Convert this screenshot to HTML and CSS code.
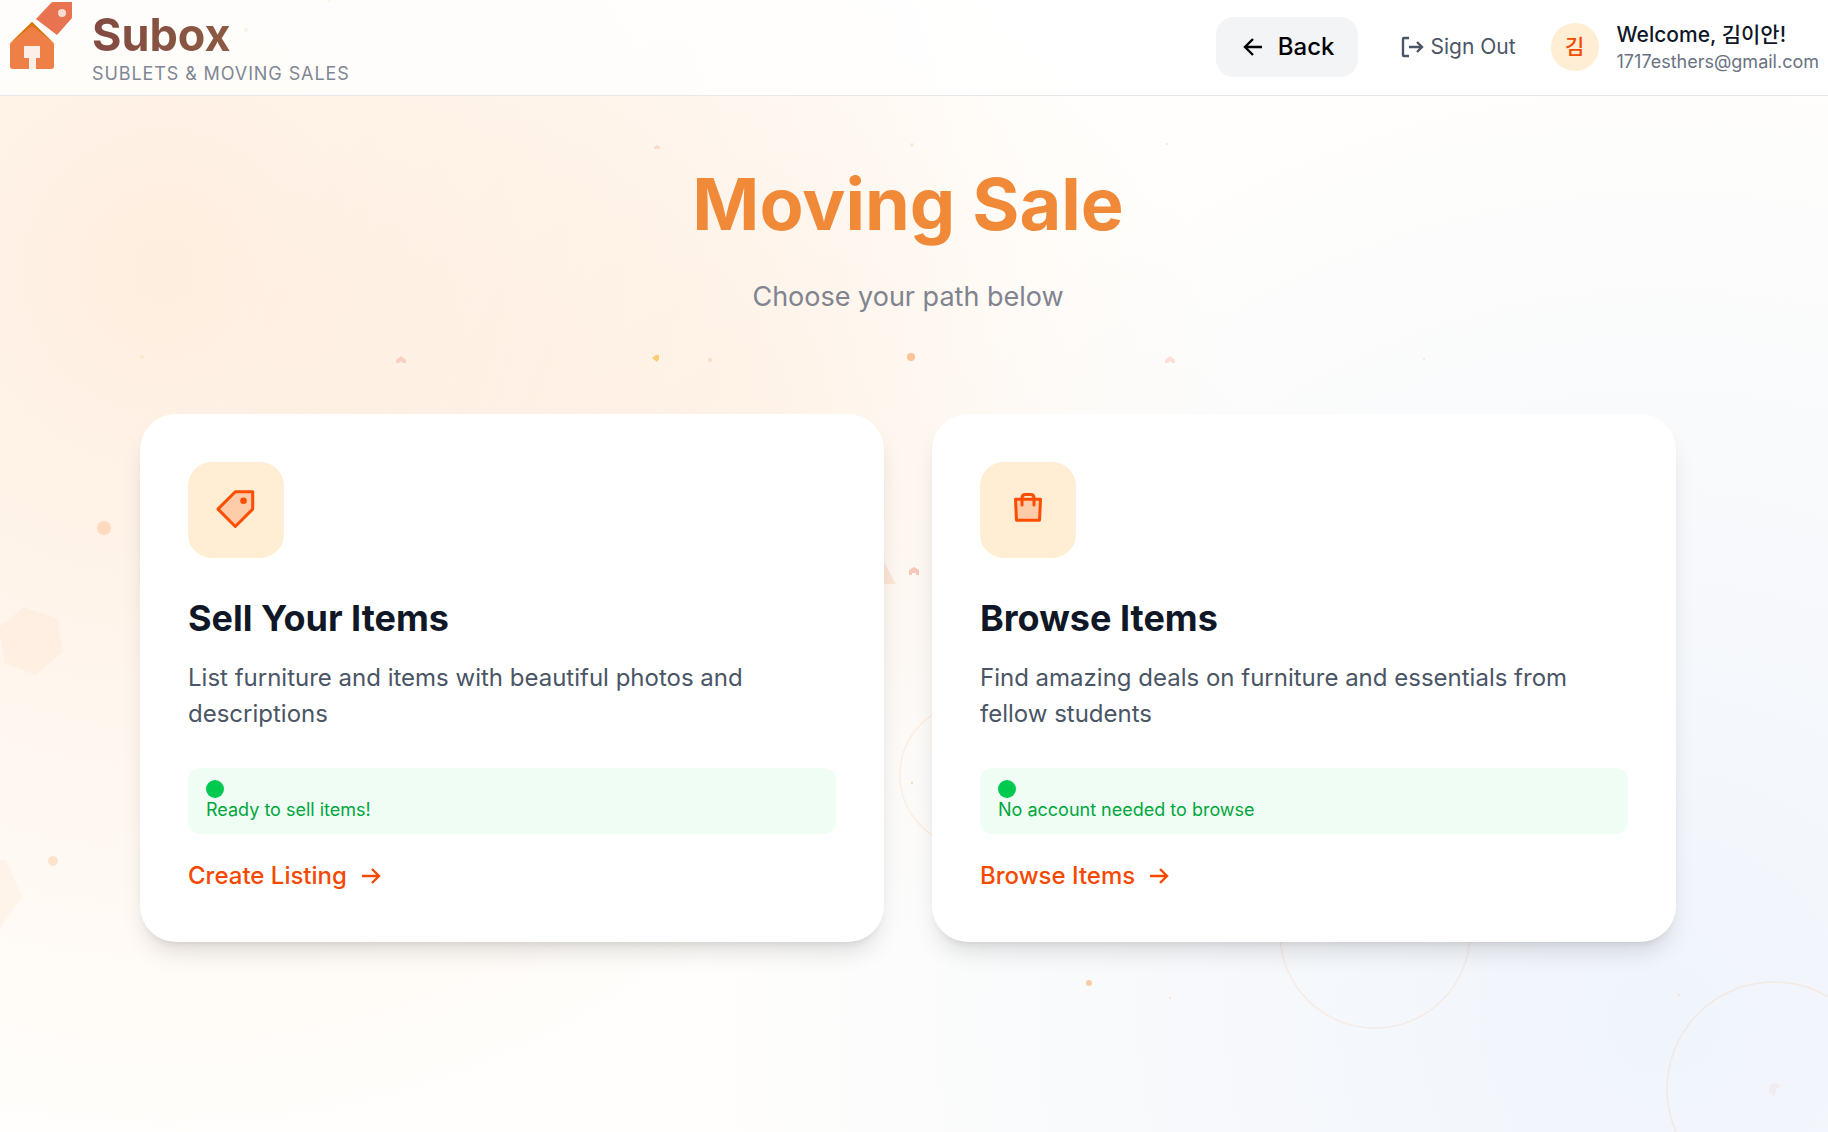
FILE: index.html
```html
<!DOCTYPE html>
<html lang="en">
<head>
<meta charset="utf-8">
<meta name="viewport" content="width=device-width, initial-scale=1">
<title>Subox – Moving Sale</title>
<link rel="stylesheet" href="styles.css">
</head>
<body>
<svg class="decor" aria-hidden="true">
  <g fill="#fb923c">
    <circle cx="104" cy="528" r="7" opacity=".25"/>
    <circle cx="53" cy="861" r="5" opacity=".22"/>
    <circle cx="911" cy="357" r="4" opacity=".5"/>
    <circle cx="710" cy="360" r="2" opacity=".25"/>
    <circle cx="1089" cy="983" r="3" opacity=".45"/>
    <circle cx="246" cy="30" r="2" opacity=".6"/>
    <circle cx="329" cy="0" r="2" opacity=".6"/>
    <circle cx="912" cy="145" r="2" opacity=".15"/>
    <circle cx="1167" cy="144" r="1" opacity=".25"/>
    <circle cx="142" cy="357" r="2" opacity=".12"/>
    <circle cx="1424" cy="359" r="1" opacity=".2"/>
    <circle cx="912" cy="783" r="1" opacity=".4"/>
    <circle cx="1170" cy="998" r="1" opacity=".2"/>
    <circle cx="1679" cy="995" r="1" opacity=".2"/>
    <path d="M24 607l34 12 5 33-27 23-32-12-5-36z" opacity=".05"/>
    <path d="M0 860h6l16 37-22 31z" opacity=".06"/>
    <path d="M884 562l12 22h-12z" opacity=".16"/>
  </g>
  <path d="M652 358l4-3h3v4l-2 3z" fill="#fbbf4a" opacity=".75"/>
  <g fill="#ef6d5a">
    <path d="M909 570l5-3 5 3v5h-3v-2h-4v2h-3z" opacity=".35"/>
    <path d="M396 360l5-4 5 4v3h-3l-2-2-2 2h-3z" opacity=".25"/>
    <path d="M1165 360l5-4 5 4v3h-3l-2-2-2 2h-3z" opacity=".2"/>
    <path d="M654 147l3-2 3 2v2h-6z" opacity=".2"/>
    <path d="M1769 1086l6-3 6 3-5 3-1 8-6-4z" opacity=".07"/>
  </g>
  <g fill="none" stroke="#fb923c" stroke-opacity=".12" stroke-width="1.5">
    <circle cx="972" cy="775" r="72"/>
    <circle cx="1375" cy="933" r="95"/>
    <circle cx="1774" cy="1089" r="107"/>
  </g>
</svg>

<header class="topbar">
  <a class="brand" href="#">
    <svg class="brand-mark" viewBox="0 0 74 74" aria-hidden="true">
      <path d="M10 44L32 22 54 44V66q0 3-3 3H13q-3 0-3-3z" fill="#ed7f47"/>
      <path d="M8 45L32 22 56 45 32 26z" fill="#d97706"/>
      <path d="M24 46h16v12h-4v11h-7V58h-5z" fill="#fff" fill-opacity=".88"/>
      <path d="M36 19L51 3q1-1 2-1H72V18L57 35z" fill="#e87351"/>
      <circle cx="62" cy="13" r="4" fill="#fbdcd2"/>
    </svg>
    <span class="brand-text">
      <span class="brand-name">Subox</span>
      <span class="brand-tag">SUBLETS &amp; MOVING SALES</span>
    </span>
  </a>
  <nav class="actions">
    <button class="back" type="button">
      <svg class="arrow" viewBox="0 0 24 24" aria-hidden="true"><path d="M21 12H4M12 4l-8 8 8 8"/></svg>
      Back
    </button>
    <button class="signout" type="button">
      <svg class="exit" viewBox="0 0 24 24" aria-hidden="true"><path d="M9 3H4a1 1 0 0 0-1 1v16a1 1 0 0 0 1 1h5M9 12h12M17 7l5 5-5 5"/></svg>
      Sign Out
    </button>
    <div class="user">
      <span class="avatar">김</span>
      <div class="user-text">
        <span class="welcome">Welcome, 김이안!</span>
        <span class="email">1717esthers@gmail.com</span>
      </div>
    </div>
  </nav>
</header>

<main class="page">
  <h1 class="title">Moving Sale</h1>
  <p class="subtitle">Choose your path below</p>

  <div class="cards">
    <section class="card">
      <div class="card-icon">
        <svg viewBox="0 0 48 48" aria-hidden="true">
          <path class="tinted" d="M23.300 5.700H40.700V23.100L23.300 40.500 6 23.100z"/>
          <circle cx="31.500" cy="14.800" r="3.300" fill="currentColor"/>
        </svg>
      </div>
      <h2 class="card-title">Sell Your Items</h2>
      <p class="card-desc">List furniture and items with beautiful photos and descriptions</p>
      <div class="status"><span class="dot"></span><span>Ready to sell items!</span></div>
      <a class="card-link" href="#">Create Listing
        <svg class="arrow" viewBox="0 0 24 24" aria-hidden="true"><path d="M3 12h17M13 5l7 7-7 7"/></svg></a>
    </section>
    <section class="card">
      <div class="card-icon">
        <svg viewBox="0 0 48 48" aria-hidden="true">
          <path class="tinted" d="M11.500 13.300h25l-1 21h-23z"/>
          <path class="line" d="M18 19v-7q0-3.500 3.500-3.500h5q3.500 0 3.500 3.500v7"/>
        </svg>
      </div>
      <h2 class="card-title">Browse Items</h2>
      <p class="card-desc">Find amazing deals on furniture and essentials from fellow students</p>
      <div class="status"><span class="dot"></span><span>No account needed to browse</span></div>
      <a class="card-link" href="#">Browse Items
        <svg class="arrow" viewBox="0 0 24 24" aria-hidden="true"><path d="M3 12h17M13 5l7 7-7 7"/></svg></a>
    </section>
  </div>
</main>
</body>
</html>
```
FILE: styles.css
```css
* {
  box-sizing: border-box;
}

body {
  margin: 0;
  min-height: 100vh;
  position: relative;
  overflow-x: hidden;
  font-family: Inter, "Noto Sans CJK KR", sans-serif;
  font-size: 24px;
  line-height: 36px;
  color: #101828;
  background:
    radial-gradient(circle at 9% 24%, rgba(251, 146, 60, .15), transparent 880px),
    radial-gradient(circle at 40% 40%, rgba(251, 146, 60, .07), transparent 520px),
    radial-gradient(circle at 91% 90%, rgba(59, 130, 246, .08), transparent 980px),
    #fffefc;
}

.decor {
  position: absolute;
  inset: 0;
  width: 100%;
  height: 100%;
  z-index: -1;
}

button {
  font: inherit;
  color: inherit;
  border: 0;
  background: none;
  padding: 0;
  cursor: pointer;
}

a {
  color: inherit;
  text-decoration: none;
}

.topbar {
  display: flex;
  align-items: center;
  justify-content: space-between;
  height: 96px;
  padding: 0 9px 1px 0;
  background: rgba(255, 255, 255, .8);
  border-bottom: 1px solid #e5e7eb;
}

.brand {
  display: flex;
  align-items: flex-start;
  gap: 18px;
  height: 94px;
}

.brand-mark {
  width: 74px;
  height: 74px;
}

.brand-text {
  display: flex;
  flex-direction: column;
  padding-top: 10px;
}

.brand-name {
  font-size: 45px;
  line-height: 50px;
  font-weight: 700;
  color: transparent;
  background: linear-gradient(90deg, #824a42 0, #8c5b42 140px);
  background-clip: text;
}

.brand-tag {
  font-size: 18px;
  line-height: 27px;
  letter-spacing: .05em;
  color: #7f8794;
}

.actions {
  display: flex;
  align-items: center;
}

.back {
  display: flex;
  align-items: center;
  gap: 13px;
  padding: 12px 24px 12px 25px;
  border-radius: 18px;
  font-weight: 500;
  color: #000;
  background: #f3f4f6;
}

.arrow {
  width: 24px;
  height: 24px;
}

.arrow path,
.exit path,
.line {
  fill: none;
  stroke: currentColor;
  stroke-width: 2.4;
}

.signout {
  display: flex;
  align-items: center;
  gap: 6px;
  margin: 0 35px 0 42px;
  font-size: 21px;
  line-height: 30px;
  color: #4a5565;
}

.exit {
  width: 24px;
  height: 24px;
}

.user {
  display: flex;
  align-items: center;
  gap: 18px;
}

.avatar {
  display: grid;
  place-items: center;
  width: 48px;
  height: 48px;
  border-radius: 50%;
  font-size: 21px;
  font-weight: 500;
  color: #f54900;
  background: #ffedd4;
}

.user-text {
  display: flex;
  flex-direction: column;
}

.welcome {
  font-size: 21px;
  line-height: 30px;
  font-weight: 500;
}

.email {
  font-size: 18px;
  line-height: 24px;
  color: #6a7282;
}

.page {
  max-width: 1536px;
  margin: 0 auto;
  padding: 72px 0;
  position: relative;
  right: 6px;
}

.title {
  margin: 0;
  font-size: 72px;
  line-height: 72px;
  font-weight: 700;
  text-align: center;
  color: #f08a38;
}

.subtitle {
  margin: 36px 0 96px;
  font-size: 27px;
  line-height: 42px;
  text-align: center;
  color: #7f8490;
}

.cards {
  display: grid;
  grid-template-columns: 1fr 1fr;
  gap: 48px;
}

.card {
  padding: 48px;
  border-radius: 36px;
  background: #fff;
  box-shadow: 0 15px 23px -5px rgba(0, 0, 0, .12), 0 6px 9px -6px rgba(0, 0, 0, .12);
}

.card-icon {
  display: grid;
  place-items: center;
  width: 96px;
  height: 96px;
  border-radius: 24px;
  color: #ff4d00;
  background: #ffedd4;
}

.card-icon svg {
  width: 48px;
  height: 48px;
}

.tinted {
  fill: currentColor;
  fill-opacity: .2;
  stroke: currentColor;
  stroke-width: 3;
  stroke-linejoin: round;
}

.card-icon .line {
  stroke-width: 3;
  stroke-linecap: round;
}

.card-title {
  margin: 36px 0 18px;
  font-size: 36px;
  line-height: 48px;
  font-weight: 700;
}

.card-desc {
  margin: 0 0 36px;
  color: #4a5565;
}

.status {
  display: flex;
  flex-direction: column;
  margin-bottom: 24px;
  padding: 12px 18px;
  border-radius: 12px;
  font-size: 18px;
  line-height: 24px;
  color: #00a63e;
  background: #f0fdf4;
}

.dot {
  width: 18px;
  height: 18px;
  border-radius: 50%;
  background: #00c950;
}

.card-link {
  display: flex;
  align-items: center;
  gap: 12px;
  font-weight: 500;
  color: #f54900;
}
```
